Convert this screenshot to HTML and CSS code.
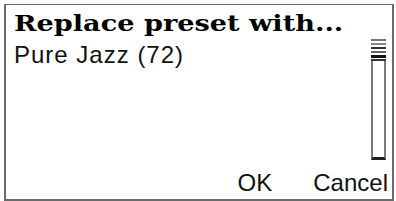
FILE: index.html
```html
<!DOCTYPE html>
<html>
<head>
<meta charset="utf-8">
<link rel="stylesheet" href="styles.css">
</head>
<body>
<div class="frame">
  <div class="title">Replace preset with...</div>
  <div class="main">
    <div class="list">
      <div class="item">Pure Jazz (72)</div>
    </div>
    <div class="scrollbar"><div class="thumb"></div></div>
  </div>
  <div class="buttons">
    <span class="btn ok">OK</span>
    <span class="btn cancel">Cancel</span>
  </div>
</div>
</body>
</html>
```
FILE: styles.css
```css
html, body {
  margin: 0;
  padding: 0;
  background: #fff;
}
body {
  width: 396px;
  height: 201px;
  overflow: hidden;
}
.frame {
  box-sizing: border-box;
  margin: 4px 0 0 4px;
  width: 390px;
  height: 197px;
  border: 2px solid #6a6a6a;
  border-top-width: 1px;
  display: flex;
  flex-direction: column;
  overflow: hidden;
}
.title {
  font-family: "DejaVu Serif", serif;
  font-weight: bold;
  font-size: 23px;
  line-height: 26px;
  color: #000;
  padding: 5px 0 0 8px;
  white-space: nowrap;
  transform: scaleX(1.18);
  transform-origin: 8px 0;
}
.main {
  display: flex;
  flex: 1;
  padding-right: 6px;
}
.list {
  flex: 1;
  padding-left: 8px;
  padding-top: 7px;
}
.item {
  font-family: "Liberation Sans", Arial, sans-serif;
  font-size: 24px;
  line-height: 24px;
  color: #111;
  letter-spacing: 1px;
}
.scrollbar {
  box-sizing: border-box;
  width: 15px;
  height: 121px;
  margin-top: 3px;
  border: 2px solid #7a7a7a;
  border-top: 0;
  border-bottom: 3px solid #222;
  background: #fff;
}
.thumb {
  height: 22px;
  margin: 0 -2px;
  background: linear-gradient(to bottom,
    #777 0px, #777 2px,
    #fff 2px, #fff 4px,
    #888 4px, #888 6px,
    #fff 6px, #fff 8px,
    #333 8px, #333 10px,
    #fff 10px, #fff 12px,
    #666 12px, #666 14px,
    #fff 14px, #fff 16px,
    #111 16px, #111 19px,
    #fff 19px, #fff 20px,
    #333 20px, #333 22px);
}
.buttons {
  display: flex;
  justify-content: flex-end;
  gap: 41px;
  margin-right: 4px;
  font-family: "Liberation Sans", Arial, sans-serif;
  font-size: 24px;
  line-height: 28px;
  color: #111;
  padding-bottom: 2px;
  white-space: nowrap;
}
```
